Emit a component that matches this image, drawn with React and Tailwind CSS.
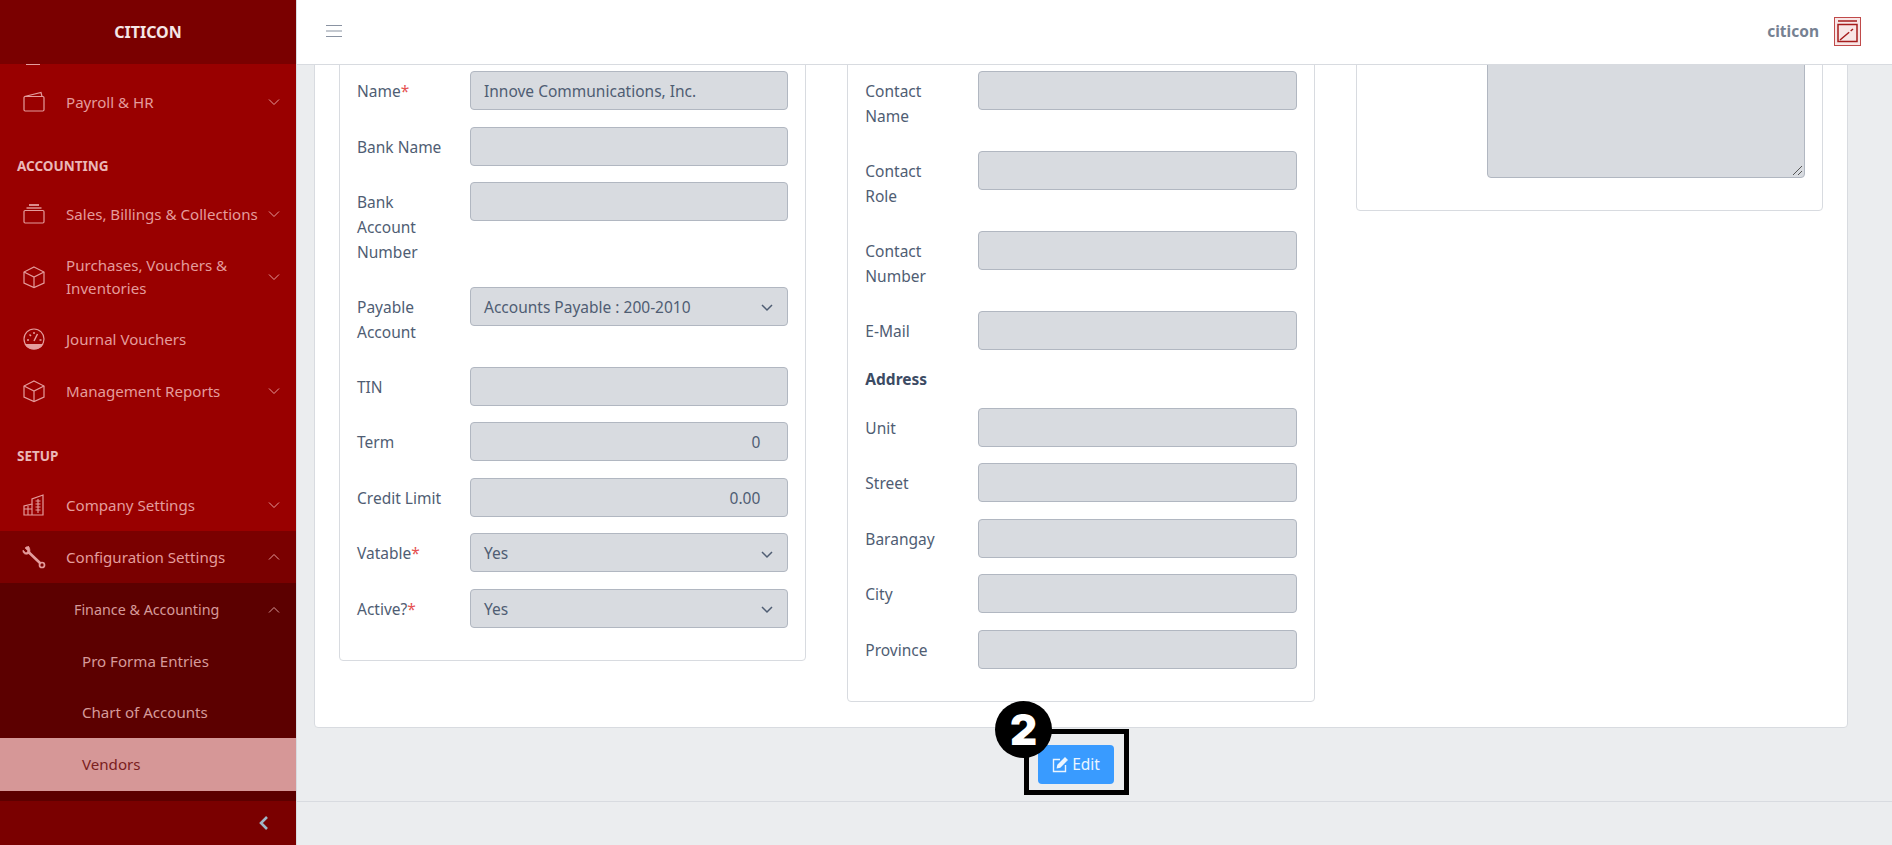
import React from 'react';

const FONT = "font-['Noto_Sans',sans-serif]";

// sidebar icons, drawn to look like the coreui set
const Wallet = () => (
  <svg width="24" height="24" viewBox="0 0 24 24" fill="none" stroke="currentColor" strokeWidth="1.2">
    <rect x="2" y="6.5" width="20" height="14.5" rx="1.2" />
    <path d="M2.5 6.5 19 2.5 20 6.5" />
  </svg>
);
const Stack = () => (
  <svg width="24" height="24" viewBox="0 0 24 24" fill="none" stroke="currentColor" strokeWidth="1.2">
    <rect x="2" y="8.5" width="20" height="12.5" rx="1.2" />
    <path d="M4.5 6h15" strokeWidth="1.4" />
    <path d="M7 3h10" strokeWidth="1.8" />
  </svg>
);
const Cube = () => (
  <svg width="24" height="24" viewBox="0 0 24 24" fill="none" stroke="currentColor" strokeWidth="1.2">
    <path d="M12 2 22 7v11l-10 4.5L2 18V7z" />
    <path d="M2 7l10 5 10-5M12 12v10.5" />
  </svg>
);
const Gauge = () => (
  <svg width="24" height="24" viewBox="0 0 24 24" fill="none" stroke="currentColor" strokeWidth="1.2">
    <circle cx="12" cy="12" r="10" />
    <path d="M3.5 17.5h17C18.5 21 15 22 12 22s-6.500-1-8.500-4.500z" fill="currentColor" />
    <path d="M12 14l3.500-7M5 13h2M17.500 13h2M7.500 7.500 9 9M12 5v2" strokeWidth="1.5" />
  </svg>
);
const Building = () => (
  <svg width="24" height="24" viewBox="0 0 24 24" fill="none" stroke="currentColor" strokeWidth="1.2">
    <path d="M2 22V13l8-2V6l11-4v20z" />
    <path d="M2 16h8M6 13v9M10 11v11M13.500 8h5M13.500 11h5M13.500 14h5M13.500 17h5M16 6v14" strokeWidth="1.1" />
  </svg>
);
const Wrench = () => (
  <svg width="24" height="24" viewBox="0 0 24 24" fill="none" stroke="currentColor" strokeLinecap="round">
    <path d="M7 7.500 18 18" strokeWidth="2.600" />
    <path d="M6.500 1.500C4 1.500 3.500 2.500 3 3l3 3-2 2-3-3c-.5 2 .5 4 3 4.300 2 .2 4-1 4-3.300 0-2.500-1-4.500-1.500-4.500z" fill="currentColor" strokeWidth="0.600" />
    <circle cx="20" cy="20" r="2.500" strokeWidth="1.700" />
  </svg>
);
const Chevron = ({ up }) => (
  <svg width="14" height="14" viewBox="0 0 14 14" fill="none" stroke="currentColor" strokeWidth="1" className="shrink-0">
    <path d={up ? 'M2 9.500l5-5 5 5' : 'M2 4.500l5 5 5-5'} />
  </svg>
);

function NavItem({ icon, children, chevron, up, h = 'h-[52px]', className = '' }) {
  return (
    <div className={`flex items-center pl-[22px] pr-[15px] text-[15.1px] leading-[23px] text-[#e49c9c] ${h} ${className}`}>
      <span className="w-[24px] shrink-0 text-[#e49c9c]">{icon}</span>
      <span className="ml-[20px] flex-1">{children}</span>
      {chevron && <Chevron up={up} />}
    </div>
  );
}

function NavTitle({ children, className }) {
  return <div className={`pl-[17px] text-[13.5px] font-bold text-[#eab8b8] ${className}`}>{children}</div>;
}

function Sidebar() {
  return (
    <aside className="w-[297px] shrink-0 flex flex-col bg-[#990000] border-r border-[#d8dbe0]">
      <div className="h-[64px] shrink-0 flex items-center justify-center bg-[#7a0000] text-[16px] font-bold text-[#f5e6e6]">
        CITICON
      </div>
      <nav className="flex-1 overflow-hidden">
        {/* bottom edge of the item scrolled away under the brand */}
        <div className="h-[1px] w-[14px] ml-[26px] bg-[#e49c9c]" />
        <div className="h-[11px]" />
        <NavItem icon={<Wallet />} chevron>Payroll &amp; HR</NavItem>
        <NavTitle className="mt-[28px] mb-[12px]">ACCOUNTING</NavTitle>
        <NavItem icon={<Stack />} chevron>Sales, Billings &amp; Collections</NavItem>
        <NavItem icon={<Cube />} chevron h="h-[73px]">Purchases, Vouchers &amp; Inventories</NavItem>
        <NavItem icon={<Gauge />}>Journal Vouchers</NavItem>
        <NavItem icon={<Cube />} chevron>Management Reports</NavItem>
        <NavTitle className="mt-[29px] mb-[12.5px]">SETUP</NavTitle>
        <NavItem icon={<Building />} chevron>Company Settings</NavItem>
        <NavItem icon={<Wrench />} chevron up className="bg-[#7a0000]">Configuration Settings</NavItem>
        <div className="bg-[#5c0000] h-[218px]">
          <div className="h-[53px] flex items-center pl-[74px] pr-[15px] text-[14.3px] text-[#d69a9a]">
            <span className="flex-1">Finance &amp; Accounting</span>
            <Chevron up />
          </div>
          <div className="h-[50px] flex items-center pl-[82px] text-[15.1px] text-[#d69a9a]">Pro Forma Entries</div>
          <div className="h-[52px] flex items-center pl-[82px] text-[15.1px] text-[#d69a9a]">Chart of Accounts</div>
          <div className="h-[53px] flex items-center pl-[82px] text-[15.1px] text-[#7a2020] bg-[#d69797]">Vendors</div>
        </div>
      </nav>
      <div className="h-[44px] shrink-0 flex items-center justify-end pr-[26px] bg-[#7a0000] text-[#9fb6c6]">
        <svg width="12" height="16" viewBox="0 0 12 16" fill="none" stroke="currentColor" strokeWidth="2.600">
          <path d="M9 2 3 8l6 6" />
        </svg>
      </div>
    </aside>
  );
}

function Header() {
  return (
    <header className="h-[65px] shrink-0 flex items-center bg-white border-b border-[#d8dbe0] pl-[29px] pr-[31px] pb-[2px]">
      <svg width="16" height="14" viewBox="0 0 16 14" stroke="#8a93a2" strokeWidth="1.200">
        <path d="M0 1.500h16M0 7h16M0 12.500h16" />
      </svg>
      <span className="ml-auto pt-[2px] text-[15.5px] font-bold text-[#768192]">citicon</span>
      <svg width="27" height="29" viewBox="0 0 27 29" fill="none" className="ml-[15px]">
        <rect x="0.500" y="0.500" width="26" height="28" fill="#f8e6e6" stroke="#c04a4a" />
        <path d="M4 4h19M4 7.500h19v17H4z" stroke="#a51c1c" strokeWidth="1.500" />
        <path d="M6 23 19 12" stroke="#a51c1c" strokeWidth="1.500" strokeDasharray="12 2 4" />
      </svg>
    </header>
  );
}

function Req() {
  return <span className="text-[#e55353]">*</span>;
}

function Field({ label, req, value = '', select, right, className = '' }) {
  return (
    <div className={`flex items-start mb-[16.5px] ${className}`}>
      <label className="w-[113px] shrink-0 pt-[8px] pb-[6px] pr-[26px] leading-[24.75px] text-[#4f5d73]">
        {label}{req && <Req />}
      </label>
      <div className={`h-[39px] flex-1 flex items-center rounded-[4px] border border-[#b1b7c1] bg-[#d8dbe0] pl-[13px] pt-[2px] text-[#4f5d73] ${right ? 'justify-end pr-[27px]' : 'pr-[13px]'}`}>
        <span className={select ? 'flex-1' : ''}>{value}</span>
        {select && (
          <svg width="14" height="14" viewBox="0 0 14 14" fill="none" stroke="#4f5d73" strokeWidth="1.500">
            <path d="M2 5l5 5 5-5" />
          </svg>
        )}
      </div>
    </div>
  );
}

function FormCard({ children, className = '' }) {
  return (
    <div className={`flex-1 bg-white border border-[#d8dbe0] rounded-[4px] px-[17px] pb-[16px] ${className}`}>
      {children}
    </div>
  );
}

export default function App() {
  return (
    <div className={`h-screen flex overflow-hidden bg-[#ebedef] text-[15.5px] ${FONT}`}>
      <Sidebar />
      <div className="flex-1 min-w-0 flex flex-col relative">
        <Header />
        <main className="flex-1 overflow-hidden pl-[17px] pr-[44px]">
          <div className="-mt-[36px] h-[699px] bg-white border border-[#d8dbe0] rounded-[4px] px-[24px] flex gap-[41px] items-start">
            <FormCard className="pt-[40px]">
              <Field label="Name" req value="Innove Communications, Inc." />
              <Field label="Bank Name" />
              <Field label="Bank Account Number" />
              <Field label="Payable Account" value="Accounts Payable : 200-2010" select />
              <Field label="TIN" />
              <Field label="Term" value="0" right />
              <Field label="Credit Limit" value="0.00" right />
              <Field label="Vatable" req value="Yes" select />
              <Field label="Active?" req value="Yes" select />
            </FormCard>
            <FormCard className="pt-[40px]">
              <Field label="Contact Name" />
              <Field label="Contact Role" />
              <Field label="Contact Number" />
              <Field label="E-Mail" />
              <div className="mb-[16.5px] font-bold leading-[24.75px] text-[#3c4b64]">Address</div>
              <Field label="Unit" />
              <Field label="Street" />
              <Field label="Barangay" />
              <Field label="City" />
              <Field label="Province" />
            </FormCard>
            <FormCard>
              <div className="flex mb-[16px]">
                <div className="w-[113px] shrink-0" />
                <div className="flex-1 h-[147px] rounded-[4px] border border-[#b1b7c1] bg-[#d8dbe0] relative overflow-hidden">
                  <svg width="11" height="11" viewBox="0 0 11 11" stroke="#555" className="absolute right-[1px] bottom-[1px]">
                    <path d="M1 10 10 1M6 10l4-4" />
                  </svg>
                </div>
              </div>
            </FormCard>
          </div>
          <div className="h-[73px] flex items-center justify-center pr-[10px]">
            <button className="h-[39px] w-[76px] flex items-center justify-center gap-[4px] rounded-[4px] bg-[#399bff] text-[#ebf5ff]">
              <svg width="16" height="16" viewBox="0 0 16 16" fill="none" stroke="currentColor" strokeWidth="1.400">
                <path d="M8 2.500H1.500v12h12V8" />
                <path d="M5.500 10.500 6 8l7-7 2 2-7 7z" fill="currentColor" />
              </svg>
              Edit
            </button>
          </div>
        </main>
        <footer className="h-[44px] shrink-0 border-t border-[#d8dbe0] bg-[#ebedef]" />
        {/* annotation frame drawn over the edit button */}
        <div className="absolute left-[727px] top-[729px] w-[105px] h-[66px] border-[5px] border-black pointer-events-none" />
        <div className="absolute left-[698px] top-[701px] w-[57px] h-[57px] rounded-full bg-black flex items-center justify-center text-white text-[42px] font-black leading-none font-['Inter',sans-serif]">
          2
        </div>
      </div>
    </div>
  );
}
